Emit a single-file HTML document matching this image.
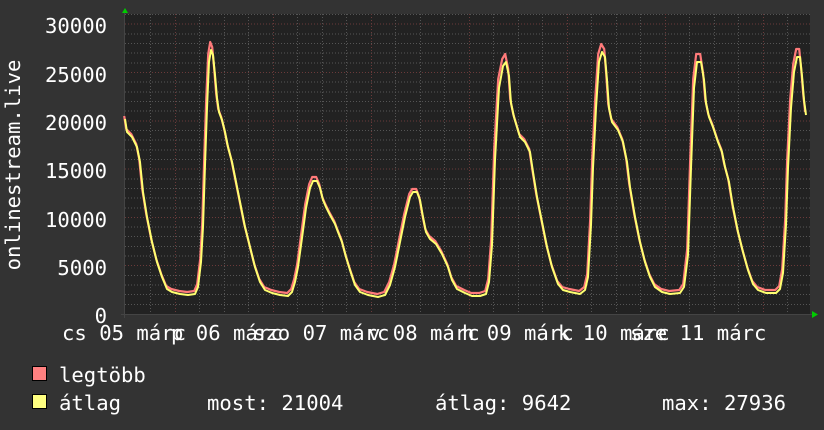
<!DOCTYPE html>
<html><head><meta charset="utf-8"><style>
html,body{margin:0;padding:0;background:#333;width:824px;height:430px;overflow:hidden}
svg text{font-family:"DejaVu Sans Mono","Liberation Mono",monospace;fill:#fff;font-size:20.6px}
</style></head><body>
<svg width="824" height="430" xmlns="http://www.w3.org/2000/svg">
<rect width="824" height="430" fill="#333"/>
<rect x="125" y="14" width="685" height="300" fill="#222"/>
<g id="grid" stroke-width="1" shape-rendering="crispEdges">
<g stroke="#555" stroke-dasharray="1,2">
<line x1="125" x2="810" y1="304.3" y2="304.3"/><line x1="125" x2="810" y1="294.7" y2="294.7"/><line x1="125" x2="810" y1="285" y2="285"/><line x1="125" x2="810" y1="275.4" y2="275.4"/>
<line x1="125" x2="810" y1="256.1" y2="256.1"/><line x1="125" x2="810" y1="246.4" y2="246.4"/><line x1="125" x2="810" y1="236.7" y2="236.7"/><line x1="125" x2="810" y1="227.1" y2="227.1"/>
<line x1="125" x2="810" y1="207.8" y2="207.8"/><line x1="125" x2="810" y1="198.1" y2="198.1"/><line x1="125" x2="810" y1="188.4" y2="188.4"/><line x1="125" x2="810" y1="178.8" y2="178.8"/>
<line x1="125" x2="810" y1="159.5" y2="159.5"/><line x1="125" x2="810" y1="149.8" y2="149.8"/><line x1="125" x2="810" y1="140.1" y2="140.1"/><line x1="125" x2="810" y1="130.5" y2="130.5"/>
<line x1="125" x2="810" y1="111.2" y2="111.2"/><line x1="125" x2="810" y1="101.5" y2="101.5"/><line x1="125" x2="810" y1="91.8" y2="91.8"/><line x1="125" x2="810" y1="82.2" y2="82.2"/>
<line x1="125" x2="810" y1="62.9" y2="62.9"/><line x1="125" x2="810" y1="53.2" y2="53.2"/><line x1="125" x2="810" y1="43.5" y2="43.5"/><line x1="125" x2="810" y1="33.9" y2="33.9"/>
<line x1="125" x2="810" y1="14.6" y2="14.6"/>
<line y1="14" y2="314" x1="150.5" x2="150.5"/><line y1="14" y2="314" x1="199.5" x2="199.5"/><line y1="14" y2="314" x1="224.5" x2="224.5"/><line y1="14" y2="314" x1="248.5" x2="248.5"/>
<line y1="14" y2="314" x1="297.5" x2="297.5"/><line y1="14" y2="314" x1="322.5" x2="322.5"/><line y1="14" y2="314" x1="346.5" x2="346.5"/>
<line y1="14" y2="314" x1="395.5" x2="395.5"/><line y1="14" y2="314" x1="420.5" x2="420.5"/><line y1="14" y2="314" x1="444.5" x2="444.5"/>
<line y1="14" y2="314" x1="493.5" x2="493.5"/><line y1="14" y2="314" x1="518.5" x2="518.5"/><line y1="14" y2="314" x1="542.5" x2="542.5"/>
<line y1="14" y2="314" x1="591.5" x2="591.5"/><line y1="14" y2="314" x1="616.5" x2="616.5"/><line y1="14" y2="314" x1="640.5" x2="640.5"/>
<line y1="14" y2="314" x1="689.5" x2="689.5"/><line y1="14" y2="314" x1="714.5" x2="714.5"/><line y1="14" y2="314" x1="738.5" x2="738.5"/>
<line y1="14" y2="314" x1="787.5" x2="787.5"/>
</g>
<g stroke="#6a3a3a" stroke-dasharray="1,2">
<line x1="125" x2="810" y1="265.7" y2="265.7"/><line x1="125" x2="810" y1="217.4" y2="217.4"/><line x1="125" x2="810" y1="169.1" y2="169.1"/><line x1="125" x2="810" y1="120.8" y2="120.8"/><line x1="125" x2="810" y1="72.5" y2="72.5"/><line x1="125" x2="810" y1="24.2" y2="24.2"/>
<line y1="14" y2="314" x1="175.5" x2="175.5"/><line y1="14" y2="314" x1="273.5" x2="273.5"/><line y1="14" y2="314" x1="371.5" x2="371.5"/><line y1="14" y2="314" x1="469.5" x2="469.5"/><line y1="14" y2="314" x1="567.5" x2="567.5"/><line y1="14" y2="314" x1="665.5" x2="665.5"/><line y1="14" y2="314" x1="763.5" x2="763.5"/>
</g>
</g>
<line x1="124.5" y1="12" x2="124.5" y2="318" stroke="#444"/>
<line x1="121" y1="314.5" x2="812" y2="314.5" stroke="#444"/>
<polygon points="122,13 128,13 125,8" fill="#0c0"/>
<polygon points="812,311 812,318 818,314.5" fill="#0c0"/>
<polyline fill="none" stroke="#ff7a7a" stroke-width="2.2" stroke-linejoin="round" transform="translate(-0.8,-1)" points="125,117 127,130 132,135 137,145 140,160 143,190 147,215 152,240 157,260 162,275 167,287 172,290 180,292 188,293 195,292 198,285 201,260 203,225 205,160 207,100 209,55 211,43 213,48 215,70 217,95 219,110 222,118 225,130 228,145 232,160 236,180 240,200 245,225 250,245 255,265 260,280 265,288 272,291 280,293 288,294 292,290 295,280 298,265 302,235 306,205 310,185 313,178 317,178 320,185 323,198 326,205 330,213 335,222 338,230 342,240 346,255 350,268 355,283 360,290 368,293 378,295 385,293 390,283 395,265 400,240 405,215 410,195 413,190 417,190 420,198 423,215 426,230 430,237 436,242 442,252 448,265 452,278 457,287 465,291 472,294 480,294 486,292 489,280 492,240 495,150 499,80 503,60 506,55 509,70 511,100 514,115 517,125 520,135 525,140 530,150 533,170 537,195 542,220 547,245 552,265 558,282 563,288 570,290 580,292 585,288 588,275 591,220 593,160 596,100 599,55 602,45 605,50 607,75 609,105 612,120 618,128 623,140 627,160 630,185 635,215 640,240 645,260 650,275 655,285 662,290 670,292 680,291 684,285 688,250 691,160 694,80 697,55 701,55 704,75 706,100 709,115 713,125 718,140 722,150 725,165 729,180 733,205 738,230 743,250 748,268 753,282 758,288 766,291 776,291 780,287 783,270 786,220 788,160 791,100 794,65 797,50 800,50 802,70 804,95 806,113"/>
<polyline fill="none" stroke="#ffff70" stroke-width="2" stroke-linejoin="round" points="125,119 127,132 132,137 137,147 140,162 143,192 147,217 152,242 157,262 162,277 167,289 172,292 180,294 188,295 195,294 198,287 201,262 203,227 205,165 207,108 209,62 211,50 213,55 215,75 217,98 219,112 222,120 225,132 228,147 232,162 236,182 240,202 245,227 250,247 255,267 260,282 265,290 272,293 280,295 288,296 292,292 295,282 298,267 302,238 306,208 310,188 313,181 317,181 320,188 323,200 326,207 330,215 335,224 338,232 342,242 346,257 350,270 355,285 360,292 368,295 378,297 385,295 390,285 395,267 400,242 405,217 410,197 413,192 417,192 420,200 423,217 426,232 430,239 436,244 442,254 448,267 452,280 457,289 465,293 472,296 480,296 486,294 489,282 492,245 495,160 499,88 503,66 506,62 509,76 511,103 514,117 517,127 520,137 525,142 530,152 533,172 537,197 542,222 547,247 552,267 558,284 563,290 570,292 580,294 585,290 588,277 591,225 593,168 596,108 599,62 602,52 605,57 607,80 609,108 612,122 618,130 623,142 627,162 630,187 635,217 640,242 645,262 650,277 655,287 662,292 670,294 680,293 684,287 688,255 691,168 694,88 697,62 701,62 704,80 706,103 709,117 713,127 718,142 722,152 725,167 729,182 733,207 738,232 743,252 748,270 753,284 758,290 766,293 776,293 780,289 783,273 786,225 788,168 791,108 794,72 797,57 800,57 802,76 804,100 806,115"/>
<g text-anchor="end">
<text x="107" y="33">30000</text>
<text x="107" y="82">25000</text>
<text x="107" y="130">20000</text>
<text x="107" y="178">15000</text>
<text x="107" y="227">10000</text>
<text x="107" y="275">5000</text>
<text x="107" y="323">0</text>
</g>
<text transform="translate(20,165) rotate(-90)" text-anchor="middle">onlinestream.live</text>
<text x="62" y="340">cs 05 márc</text>
<text x="171" y="340">p 06 márc</text>
<text x="253" y="340">szo 07 márc</text>
<text x="368" y="340">v 08 márc</text>
<text x="462" y="340">h 09 márc</text>
<text x="558" y="340">k 10 márc</text>
<text x="630" y="340">sze 11 márc</text>
<rect x="32.5" y="366.5" width="14" height="14" fill="#ff8080" stroke="#000"/>
<rect x="32.5" y="394.5" width="14" height="14" fill="#ffff80" stroke="#000"/>
<text x="59" y="382">legtöbb</text>
<text x="59" y="410">átlag</text>
<text x="207" y="410">most: 21004</text>
<text x="435" y="410">átlag: 9642</text>
<text x="662" y="410">max: 27936</text>
</svg>
</body></html>
